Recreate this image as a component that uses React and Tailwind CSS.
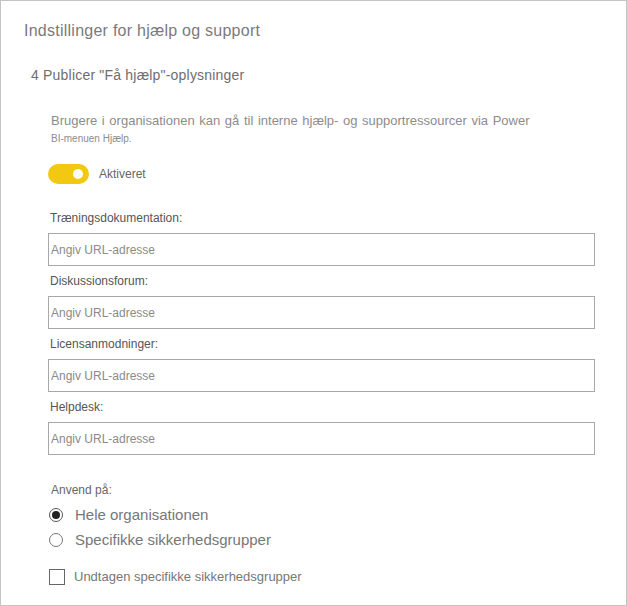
import React from "react";

const fields = [
  "Træningsdokumentation:",
  "Diskussionsforum:",
  "Licensanmodninger:",
  "Helpdesk:",
];

function UrlField({ label }) {
  return (
    <div className="flex flex-col">
      <label className="text-[12px] leading-[16px] text-[#555] pl-[2px]">{label}</label>
      <input
        type="text"
        placeholder="Angiv URL-adresse"
        className="mt-[7px] h-[33px] w-full border border-[#a8a8a8] bg-white px-[2px] text-[12px] text-[#555] placeholder:text-[#8a8a8a] outline-none"
      />
    </div>
  );
}

export default function App() {
  return (
    <div
      className="w-[627px] h-[606px] border border-[#c4c4c4] bg-white"
      style={{ fontFamily: '"Liberation Sans", Arial, sans-serif' }}
    >
      {/* header */}
      <h1 className="pt-[20px] pl-[23px] text-[16px] leading-[20px] tracking-[0.25px] text-[#7a7a7a] font-normal">
        Indstillinger for hjælp og support
      </h1>
      <h2 className="mt-[25px] pl-[30px] text-[14px] leading-[18px] tracking-[0.2px] text-[#6e6e6e] font-normal">
        4 Publicer "Få hjælp"-oplysninger
      </h2>

      <div className="pl-[47px] pr-[31px]">
        <p className="mt-[29px] pl-[3px] text-[13px] leading-[16px] text-[#8c8c8c] [word-spacing:1px]">
          Brugere i organisationen kan gå til interne hjælp- og supportressourcer via Power
        </p>
        <p className="mt-[4px] pl-[3px] text-[10px] leading-[12px] text-[#8c8c8c]">
          BI-menuen Hjælp.
        </p>

        {/* toggle */}
        <div className="mt-[19px] flex items-center gap-[10px]">
          <button className="flex h-[20px] w-[41px] items-center justify-end rounded-full bg-[#f2c811] pr-[6px]">
            <span className="h-[10px] w-[10px] rounded-full bg-white" />
          </button>
          <span className="text-[12px] text-[#666]">Aktiveret</span>
        </div>

        {/* url fields */}
        <div className="mt-[26px] flex flex-col gap-[7px]">
          {fields.map((f) => (
            <UrlField key={f} label={f} />
          ))}
        </div>

        {/* apply to */}
        <p className="mt-[27px] pl-[3px] text-[12px] leading-[16px] text-[#666]">Anvend på:</p>
        <div className="mt-[9px] flex flex-col gap-[10px]">
          <label className="flex items-center gap-[12px] text-[15px] leading-[15px] text-[#777]">
            <span className="ml-[1px] flex h-[14px] w-[14px] items-center justify-center rounded-full border border-[#555]">
              <span className="h-[8px] w-[8px] rounded-full bg-[#222]" />
            </span>
            Hele organisationen
          </label>
          <label className="flex items-center gap-[12px] text-[15px] leading-[15px] text-[#777]">
            <span className="ml-[1px] h-[14px] w-[14px] rounded-full border border-[#777]" />
            Specifikke sikkerhedsgrupper
          </label>
        </div>

        <label className="mt-[20px] flex items-center gap-[9px] text-[13px] text-[#777]">
          <span className="ml-[1px] h-[16px] w-[16px] border border-[#666]" />
          Undtagen specifikke sikkerhedsgrupper
        </label>
      </div>
    </div>
  );
}
